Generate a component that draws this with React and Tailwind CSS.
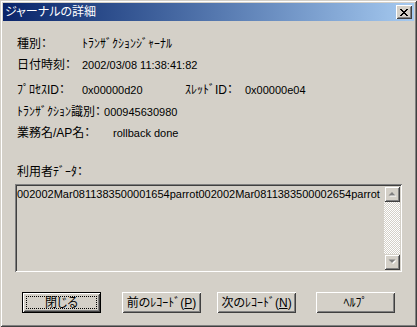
import React from "react";

const raised =
  "shadow-[inset_1px_1px_#ffffff,inset_-1px_-1px_#404040,inset_2px_2px_#d4d0c8,inset_-2px_-2px_#808080]";
const sbRaised =
  "shadow-[inset_1px_1px_#d4d0c8,inset_-1px_-1px_#404040,inset_2px_2px_#ffffff,inset_-2px_-2px_#808080]";
const sunken =
  "shadow-[inset_1px_1px_#808080,inset_-1px_-1px_#ffffff,inset_2px_2px_#404040,inset_-2px_-2px_#d4d0c8]";

function Latin({ children }) {
  return <span className="text-[11px] font-['Liberation_Sans',sans-serif]">{children}</span>;
}

function Button({ children, isDefault, className = "" }) {
  if (isDefault) {
    return (
      <div className={`w-[79px] h-[21px] border border-black bg-[#d4d0c8] flex ${className}`}>
        <div className={`flex-1 ${raised} p-[3px] flex`}>
          <div className="flex-1 border border-dotted border-black flex items-center justify-center text-[12px] leading-none">
            {children}
          </div>
        </div>
      </div>
    );
  }
  return (
    <div
      className={`w-[79px] h-[21px] bg-[#d4d0c8] ${raised} flex items-center justify-center text-[12px] leading-none ${className}`}
    >
      {children}
    </div>
  );
}

function Arrow({ down }) {
  return (
    <svg width="9" height="6" viewBox="0 0 9 6" className="block">
      {down ? (
        <>
          <path d="M1.5 1.5 H8.5 L5 5 Z" fill="#ffffff" />
          <path d="M0.5 0.5 H7.5 L4 4 Z" fill="#808080" />
        </>
      ) : (
        <>
          <path d="M1.5 5.5 H8.5 L5 2 Z" fill="#ffffff" />
          <path d="M0.5 4.5 H7.5 L4 1 Z" fill="#808080" />
        </>
      )}
    </svg>
  );
}

export default function App() {
  return (
    <div className="w-[417px] h-[327px] bg-[#d4d0c8] text-black font-['Liberation_Sans','Noto_Sans_CJK_JP',sans-serif] [font-feature-settings:'palt'] shadow-[inset_1px_1px_#d4d0c8,inset_-1px_-1px_#404040,inset_2px_2px_#ffffff,inset_-2px_-2px_#808080] p-[3px] flex flex-col">
      {/* Title bar */}
      <div className="h-[18px] bg-linear-to-r from-[#0a246a] to-[#a6caf0] flex items-center justify-between pl-[2px] pr-[2px]">
        <span className="text-white text-[12px] leading-none">ジャーナルの詳細</span>
        <div className={`w-[16px] h-[14px] bg-[#d4d0c8] ${raised} flex items-center justify-center`}>
          <svg width="8" height="7" viewBox="0 0 8 7" className="block" shapeRendering="crispEdges">
            <path
              d="M0 0h2v1h-2zM6 0h2v1h-2zM1 1h2v1h-2zM5 1h2v1h-2zM2 2h4v1h-4zM3 3h2v1h-2zM2 4h4v1h-4zM1 5h2v1h-2zM5 5h2v1h-2zM0 6h2v1h-2zM6 6h2v1h-2z"
              fill="#000"
            />
          </svg>
        </div>
      </div>

      {/* Content */}
      <div className="flex flex-col pt-[15px] text-[12px]">
        <div className="h-[16px] flex items-center pl-[14px] leading-none">
          <span className="w-[65px] shrink-0">種別：</span>
          <span>ﾄﾗﾝｻﾞｸｼｮﾝｼﾞｬｰﾅﾙ</span>
        </div>
        <div className="mt-[5px] h-[16px] flex items-center pl-[14px] leading-none">
          <span className="w-[65px] shrink-0">日付時刻：</span>
          <Latin>2002/03/08 11:38:41:82</Latin>
        </div>
        <div className="mt-[9px] h-[16px] flex items-center pl-[14px] leading-none">
          <span className="w-[65px] shrink-0">ﾌﾟﾛｾｽID：</span>
          <span className="w-[103px] shrink-0">
            <Latin>0x00000d20</Latin>
          </span>
          <span className="w-[60px] shrink-0">ｽﾚｯﾄﾞID：</span>
          <Latin>0x00000e04</Latin>
        </div>
        <div className="mt-[6px] h-[16px] flex items-center pl-[14px] leading-none">
          <span className="shrink-0 mr-[3px]">ﾄﾗﾝｻﾞｸｼｮﾝ識別：</span>
          <Latin>000945630980</Latin>
        </div>
        <div className="mt-[5px] h-[16px] flex items-center pl-[14px] leading-none">
          <span className="w-[96px] shrink-0">業務名/AP名：</span>
          <Latin>rollback done</Latin>
        </div>
        <div className="mt-[23px] h-[16px] flex items-center pl-[14px] leading-none">
          <span>利用者ﾃﾞｰﾀ：</span>
        </div>

        {/* Text area */}
        <div className={`mt-[4px] mx-[12px] h-[88px] ${sunken} p-[2px] flex`}>
          <div className="flex-1 pt-[1px] text-[11px] leading-[14px] font-['Liberation_Sans',sans-serif] whitespace-nowrap overflow-hidden">
            002002Mar0811383500001654parrot002002Mar0811383500002654parrot
          </div>
          <div className="w-[16px] flex flex-col">
            <div className={`h-[16px] bg-[#d4d0c8] ${sbRaised} flex items-center justify-center`}>
              <Arrow />
            </div>
            <div className="flex-1 bg-[repeating-conic-gradient(#d4d0c8_0%_25%,#ffffff_0%_50%)] bg-size-[2px_2px]" />
            <div className={`h-[16px] bg-[#d4d0c8] ${sbRaised} flex items-center justify-center`}>
              <Arrow down />
            </div>
          </div>
        </div>

        {/* Buttons */}
        <div className="mt-[20px] flex pl-[19px]">
          <Button isDefault>閉じる</Button>
          <Button className="ml-[21px]">
            前のﾚｺｰﾄﾞ(<span className="underline">P</span>)
          </Button>
          <Button className="ml-[16px]">
            次のﾚｺｰﾄﾞ(<span className="underline">N</span>)
          </Button>
          <Button className="ml-[20px]">ﾍﾙﾌﾟ</Button>
        </div>
      </div>
    </div>
  );
}
